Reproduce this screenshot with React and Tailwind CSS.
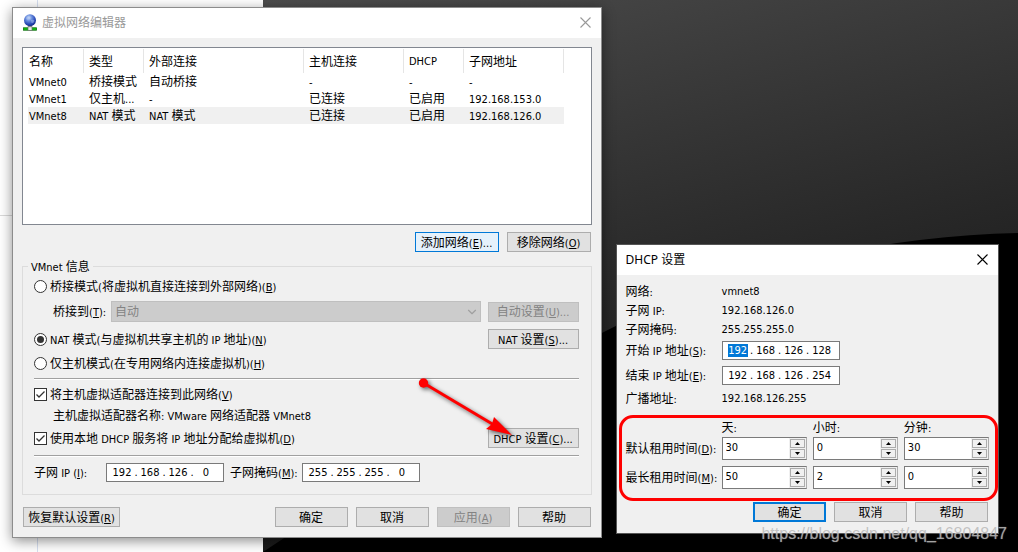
import React from 'react'
import { ChevronDown } from 'lucide-react'
import clsx from 'clsx'


// Chinese runs are one size larger than latin ones, "&X" underlines the shortcut letter
const Txt = ({ children }) => {
    const parts = children.split(/([\u4e00-\u9fff]+|&[A-Z])/).filter(Boolean);

    return (
        <span className="block pt-0.5 leading-[14px] whitespace-pre">
            {parts.map((part, i) => {
                if (part[0] === '&') return <u key={i} className="underline-offset-1">{part[1]}</u>;
                if (/[\u4e00-\u9fff]/.test(part)) return <span key={i} className="text-[12px]">{part}</span>;
                return part;
            })}
        </span>
    );
};

const Button = ({ children, className, primary, hot, disabled }) => (
    <button
        type="button"
        disabled={disabled}
        className={clsx(
            'flex h-5 shrink-0 items-center justify-center',
            primary ? 'border-2 border-[#0078d7] bg-[#e1e1e1]' : 'border',
            hot && 'border-[#0078d7] bg-[#e5f1fb]',
            disabled && 'border-[#bfbfbf] bg-[#cccccc] text-[#838383]',
            !primary && !hot && !disabled && 'border-[#adadad] bg-[#e1e1e1]',
            className,
        )}
    >
        <Txt>{children}</Txt>
    </button>
);

const TitleBar = ({ title, icon, inactive }) => (
    <div className={clsx(
        'flex h-[30px] items-center bg-white pr-[10px] pb-px pl-[9px] font-["Noto_Sans","Noto_Sans_CJK_SC",sans-serif] text-[12px]',
        inactive ? 'text-[#999999]' : 'text-black',
    )}>
        {icon}
        <h1 className="flex-1">{title}</h1>
        <button type="button" aria-label="关闭">
            <svg viewBox="0 0 11 11" className="size-[11px]" fill="none" stroke="currentColor" strokeWidth="1.1">
                <path d="M0.5 0.5 L10.5 10.5 M10.5 0.5 L0.5 10.5" />
            </svg>
        </button>
    </div>
);

const GlobeIcon = () => (
    <svg viewBox="0 0 16 17" className="mr-1 h-[17px] w-4">
        <defs>
            <radialGradient id="globe" cx="0.4" cy="0.3" r="0.7">
                <stop offset="0" stopColor="#d5e4fb" />
                <stop offset="0.35" stopColor="#6f93e0" />
                <stop offset="0.75" stopColor="#2b4bb8" />
                <stop offset="1" stopColor="#162f8c" />
            </radialGradient>
        </defs>
        <path d="M6 11 H10 V14 H6 Z" fill="#8d9199" />
        <circle cx="8" cy="6.2" r="6" fill="url(#globe)" />
        <path d="M4 4 Q6 1.5 8 3 Q7 6 5 6 Z M9 6 Q12 5 12.5 7 Q11 10 9.5 9 Z" fill="#a9c2f2" opacity="0.5" />
        <rect x="1.5" y="13.8" width="13" height="2.4" fill="#12c412" stroke="#0a6b0a" strokeWidth="0.8" />
        <rect x="6" y="12.8" width="4" height="3.6" fill="#e8ebe8" stroke="#6a716a" strokeWidth="0.7" />
    </svg>
);

const Radio = ({ id, children, defaultChecked }) => (
    <div className="flex h-4 items-center gap-[3px]">
        <input
            id={id}
            type="radio"
            name="mode"
            defaultChecked={defaultChecked}
            className="grid size-[13px] appearance-none place-items-center rounded-full border border-[#333333] bg-white checked:after:size-[7px] checked:after:rounded-full checked:after:bg-[#333333]"
        />
        <label htmlFor={id}><Txt>{children}</Txt></label>
    </div>
);

const Checkbox = ({ id, children }) => (
    <div className="flex h-4 items-center gap-[3px]">
        <span className="relative grid size-[13px]">
            <input
                id={id}
                type="checkbox"
                defaultChecked
                className="peer size-[13px] appearance-none border border-[#333333] bg-white"
            />
            <svg viewBox="0 0 13 13" className="pointer-events-none absolute inset-0 hidden peer-checked:block" fill="none" stroke="#333333" strokeWidth="1.3">
                <path d="M2.5 6.5 L5 9 L10.5 3.5" />
            </svg>
        </span>
        <label htmlFor={id}><Txt>{children}</Txt></label>
    </div>
);

const IpInput = ({ id, label, value, selected }) => (
    <div role="group" aria-label={label} className="flex h-[19px] w-[118px] items-center border border-[#7a7a7a] bg-white pl-1">
        {value.split('.').map((part, i) => (
            <React.Fragment key={i}>
                {i > 0 && <span className="w-1.5 text-center">.</span>}
                <input
                    id={i === 0 ? id : undefined}
                    aria-label={`${label} ${i + 1}`}
                    defaultValue={part}
                    className={clsx(
                        'mx-px h-[13px] w-5 text-center outline-none',
                        selected && i === 0 && 'bg-[#0078d7] text-white',
                    )}
                />
            </React.Fragment>
        ))}
    </div>
);

const Spinner = ({ label, value }) => (
    <div className="flex h-[23px] border border-[#7a7a7a] border-r-[#adadad] bg-white">
        <input aria-label={label} defaultValue={value} inputMode="numeric" className="h-[18px] w-0 flex-1 pl-[3px] outline-none" />
        <div className="flex w-[17px] flex-col justify-between bg-[#f0f0f0] p-px">
            <button type="button" aria-label="增加" className="flex h-[9px] items-center justify-center border border-[#acacac] bg-[#f0f0f0]">
                <svg viewBox="0 0 5 3" className="h-[3px] w-[5px]"><path d="M0 3 L2.5 0 L5 3 Z" /></svg>
            </button>
            <button type="button" aria-label="减少" className="flex h-[9px] items-center justify-center border border-[#acacac] bg-[#f0f0f0]">
                <svg viewBox="0 0 5 3" className="h-[3px] w-[5px]"><path d="M0 0 L2.5 3 L5 0 Z" /></svg>
            </button>
        </div>
    </div>
);

const Divider = () => <hr className="h-0.5 border-t border-b border-t-[#a0a0a0] border-b-white" />;

const columns = ['名称', '类型', '外部连接', '主机连接', 'DHCP', '子网地址'];

const networks = [
    ['VMnet0', '桥接模式', '自动桥接', '-', '-', '-'],
    ['VMnet1', '仅主机...', '-', '已连接', '已启用', '192.168.153.0'],
    ['VMnet8', 'NAT 模式', 'NAT 模式', '已连接', '已启用', '192.168.126.0'],
];

const NetworkList = () => (
    <div className="h-[178px] overflow-hidden border border-[#828790] bg-white pt-px pl-[5px]">
        <table className="w-[536px] table-fixed border-separate border-spacing-0 text-left">
            <colgroup>
                <col className="w-[56px]" />
                <col className="w-[60px]" />
                <col className="w-[160px]" />
                <col className="w-[100px]" />
                <col className="w-[60px]" />
                <col className="w-[100px]" />
            </colgroup>
            <thead>
                <tr className="h-6">
                    {columns.map((name) => (
                        <th key={name} className="border-r border-[#e5e5e5] p-0 pl-[5px] font-normal first:pl-px">
                            <Txt>{name}</Txt>
                        </th>
                    ))}
                </tr>
            </thead>
            <tbody>
                {networks.map((row, i) => (
                    <tr key={row[0]} className={clsx('h-[17px]', i === 2 && 'bg-[#f0f0f0]')}>
                        {row.map((cell, j) => (
                            <td key={j} className="p-0 pl-[5px] first:pl-px">
                                <Txt>{cell}</Txt>
                            </td>
                        ))}
                    </tr>
                ))}
            </tbody>
        </table>
    </div>
);

const Arrow = () => (
    <svg viewBox="0 0 100 65" className="pointer-events-none absolute right-16 bottom-2 h-[65px] w-[100px] overflow-visible drop-shadow-[2px_2px_2px_rgba(0,0,0,0.6)]">
        <circle cx="8.5" cy="8" r="4.7" fill="#fe0000" />
        <path d="M8.5 8 L79 50" stroke="#fe0000" strokeWidth="3" />
        <path d="M97 60 L71 54 L77 49 L79 42 Z" fill="#fe0000" />
    </svg>
);

const NetworkEditor = () => (
    <section className="min-w-0 grow-[590] basis-0 border border-[#8c8c8c] bg-[#f0f0f0] shadow-[0_3px_12px_rgba(0,0,0,0.45)]">
        <TitleBar title="虚拟网络编辑器" icon={<GlobeIcon />} inactive />
        <div className="px-[9px] pt-[9px] pb-[10px]">
            <NetworkList />
            <div className="mt-[7px] flex justify-end gap-2 px-px">
                <Button hot className="w-[84px]">添加网络(&E)...</Button>
                <Button className="w-[84px]">移除网络(&O)</Button>
            </div>

            <fieldset className="mt-1.5 border border-[#dcdcdc] pr-3 pb-3 pl-[11px]">
                <legend className="-ml-1.5 h-4 px-[3px]"><Txt>VMnet 信息</Txt></legend>

                <div className="pt-1">
                    <Radio id="bridged">桥接模式(将虚拟机直接连接到外部网络)(&B)</Radio>
                </div>
                <div className="mt-[7px] flex items-center pl-[19px]">
                    <label htmlFor="bridge-to" className="w-[58px]"><Txt>桥接到(&T):</Txt></label>
                    <div className="relative flex-1">
                        <select id="bridge-to" disabled className="block h-[21px] w-full appearance-none border border-[#bfbfbf] bg-[#cccccc] pl-[3px] text-[12px] text-[#838383] opacity-100">
                            <option>自动</option>
                        </select>
                        <ChevronDown className="pointer-events-none absolute top-1 right-0.5 size-3.5 text-[#a0a0a0]" strokeWidth={2} />
                    </div>
                    <Button disabled className="ml-[7px] w-[91px]">自动设置(&U)...</Button>
                </div>
                <div className="mt-[7px] flex items-center justify-between">
                    <Radio id="nat" defaultChecked>NAT 模式(与虚拟机共享主机的 IP 地址)(&N)</Radio>
                    <Button className="w-[91px]">NAT 设置(&S)...</Button>
                </div>
                <div className="mt-1.5 mb-[7px]">
                    <Radio id="host-only">仅主机模式(在专用网络内连接虚拟机)(&H)</Radio>
                </div>

                <Divider />
                <div className="mt-1.5">
                    <Checkbox id="host-adapter">将主机虚拟适配器连接到此网络(&V)</Checkbox>
                </div>
                <p className="mt-[5px] h-4 pl-[19px]"><Txt>主机虚拟适配器名称: VMware 网络适配器 VMnet8</Txt></p>
                <div className="mt-[5px] mb-[7px] flex items-center justify-between">
                    <Checkbox id="dhcp">使用本地 DHCP 服务将 IP 地址分配给虚拟机(&D)</Checkbox>
                    <div className="relative">
                        <Button className="w-[91px]">DHCP 设置(&C)...</Button>
                        <Arrow />
                    </div>
                </div>

                <Divider />
                <div className="mt-1.5 flex items-center">
                    <label htmlFor="subnet-ip" className="w-[72px]"><Txt>子网 IP (&I):</Txt></label>
                    <IpInput id="subnet-ip" label="子网 IP" value="192.168.126.0" />
                    <label htmlFor="subnet-mask" className="ml-1.5 w-[72px]"><Txt>子网掩码(&M):</Txt></label>
                    <IpInput id="subnet-mask" label="子网掩码" value="255.255.255.0" />
                </div>
            </fieldset>

            <div className="mt-3 flex gap-2 px-px">
                <Button className="mr-auto w-[97px]">恢复默认设置(&R)</Button>
                <Button className="w-[73px]">确定</Button>
                <Button className="w-[73px]">取消</Button>
                <Button disabled className="w-[73px]">应用(&A)</Button>
                <Button className="w-[73px]">帮助</Button>
            </div>
        </div>
    </section>
);

const InfoRow = ({ label, value }) => (
    <div className="flex h-[19px] items-center">
        <span className="w-24"><Txt>{label}</Txt></span>
        <span>{value}</span>
    </div>
);

const leases = [
    { label: '默认租用时间(&D):', values: ['30', '0', '30'] },
    { label: '最长租用时间(&M):', values: ['50', '2', '0'] },
];

const units = ['天:', '小时:', '分钟:'];

const DhcpSettings = () => (
    <section className="mt-[237px] min-w-0 grow-[383] basis-0 border border-[#555555] bg-[#f0f0f0]">
        <TitleBar title="DHCP 设置" />
        <div className="px-[9px] pt-[7px] pb-[11px]">
            <InfoRow label="网络:" value="vmnet8" />
            <InfoRow label="子网 IP:" value="192.168.126.0" />
            <InfoRow label="子网掩码:" value="255.255.255.0" />
            <div className="mt-0.5 flex items-center">
                <label htmlFor="start-ip" className="w-24"><Txt>开始 IP 地址(&S):</Txt></label>
                <IpInput id="start-ip" label="开始 IP 地址" value="192.168.126.128" selected />
            </div>
            <div className="mt-1.5 mb-1 flex items-center">
                <label htmlFor="end-ip" className="w-24"><Txt>结束 IP 地址(&E):</Txt></label>
                <IpInput id="end-ip" label="结束 IP 地址" value="192.168.126.254" />
            </div>
            <InfoRow label="广播地址:" value="192.168.126.255" />

            <div className="relative mt-[9px]">
                <div className="grid h-5 grid-cols-[90px_1fr_1fr_1fr] items-center gap-x-1.5">
                    <span />
                    {units.map((unit) => (
                        <span key={unit}><Txt>{unit}</Txt></span>
                    ))}
                </div>
                <div className="flex flex-col gap-1.5">
                    {leases.map(({ label, values }) => (
                        <div key={label} className="grid grid-cols-[90px_1fr_1fr_1fr] items-center gap-x-1.5">
                            <span><Txt>{label}</Txt></span>
                            {values.map((value, i) => (
                                <Spinner key={i} label={units[i]} value={value} />
                            ))}
                        </div>
                    ))}
                </div>
                <div className="pointer-events-none absolute -top-0.5 -right-[9px] -bottom-3 -left-[7px] rounded-[14px] border-3 border-[#fe0000]" />
            </div>

            <div className="mt-[13px] flex justify-end gap-2 pr-px">
                <Button primary className="w-[73px]">确定</Button>
                <Button className="w-[73px]">取消</Button>
                <Button className="w-[73px]">帮助</Button>
            </div>
        </div>
    </section>
);

const Desktop = () => (
    <div className="absolute inset-0 -z-10 flex">
        <div className="flex w-[25.8%] bg-white">
            <div className="w-[38px] border-r border-[#d6dff0]">
                <div className="h-[216px] border-b border-[#d9d9d9]" />
            </div>
        </div>
        <div className="flex-1 bg-linear-165 from-[#4c4c4c] to-[#161616] to-80%">
            <svg viewBox="0 0 755 552" preserveAspectRatio="none" className="size-full">
                <path d="M0 552 L200 420 Q337 318 480 276 Q620 236 755 233 V552 Z" fill="#000000" />
            </svg>
        </div>
    </div>
);

const App = () => {
    return (
        <main className='relative isolate flex min-h-screen items-start gap-3.5 overflow-hidden pt-[7px] pr-[19px] pl-3 font-["DejaVu_Sans_Condensed","Noto_Sans_CJK_SC",sans-serif] text-[11px] leading-4 text-black'>
            <Desktop />
            <NetworkEditor />
            <DhcpSettings />
            <p className='pointer-events-none absolute right-[11px] bottom-1.5 font-["Liberation_Sans",sans-serif] text-[16px] leading-6 text-[#b4b4b4]/80 [text-shadow:0_0_1px_#ffffff80]'>
                https://blog.csdn.net/qq_16804847
            </p>
        </main>
    );
};

export default App;
